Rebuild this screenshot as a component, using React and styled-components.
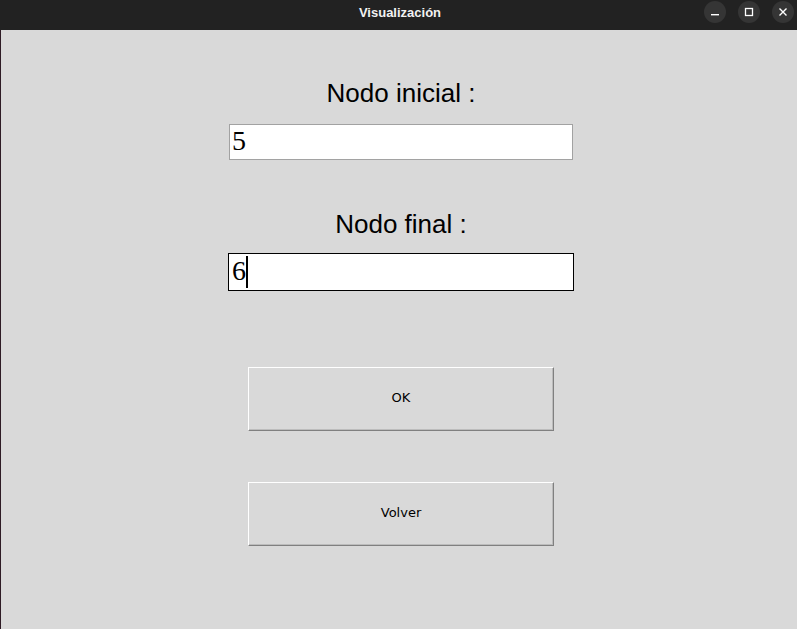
import React from 'react';
import styled, { createGlobalStyle } from 'styled-components';

const Global = createGlobalStyle`
  html, body {
    margin: 0;
    padding: 0;
    background: #d9d9d9;
  }
`

const Win = styled.div`
  width: 797px;
  height: 629px;
  display: flex;
  flex-direction: column;
  overflow: hidden;
`
const TitleBar = styled.div`
  height: 30px;
  flex-shrink: 0;
  background: #222222;
  position: relative;
  display: flex;
  align-items: center;
  justify-content: center;
  padding-bottom: 5px;
  box-sizing: border-box;
`
const Title = styled.div`
  color: #f2f2f2;
  font-family: "Liberation Sans", Arial, sans-serif;
  font-weight: bold;
  font-size: 13px;
  padding-left: 3px;
`
const Controls = styled.div`
  position: absolute;
  right: 3px;
  top: 1px;
  display: flex;
  gap: 12px;
`
const CtrlBtn = styled.div`
  width: 22px;
  height: 22px;
  border-radius: 50%;
  background: #353535;
  display: flex;
  align-items: center;
  justify-content: center;
`
const Body = styled.div`
  flex: 1;
  background: #d9d9d9;
  border-left: 1px solid #2e1b25;
  display: flex;
  flex-direction: column;
  align-items: center;
  padding-top: 48px;
  padding-left: 4px;
`
const Label = styled.div`
  font-family: "Liberation Sans", Arial, sans-serif;
  font-size: 26px;
  line-height: 30px;
  color: #000;
  margin-top: ${p => p.$top || 0}px;
`
const Entry = styled.div`
  width: 346px;
  height: 38px;
  box-sizing: border-box;
  margin-top: ${p => p.$top || 13}px;
  background: #fff;
  border: 1px solid ${p => (p.$focused ? '#000' : '#d9d9d9')};
  box-shadow: inset 0 0 0 1px ${p => (p.$focused ? '#ffffff' : '#a2a2a2')};
  padding: 1px 3px;
  font-family: "Liberation Serif", "Times New Roman", serif;
  font-size: 28px;
  line-height: 32px;
  color: #000;
  white-space: nowrap;
`
const Caret = styled.span`
  display: inline-block;
  width: 2px;
  height: 32px;
  background: #000;
  vertical-align: top;
  margin-top: 1px;
`
const Button = styled.button`
  width: 306px;
  height: 64px;
  margin-top: ${p => p.$top}px;
  background: #d9d9d9;
  border: none;
  border-top: 1px solid #ffffff;
  border-left: 1px solid #ffffff;
  border-right: 1px solid #808080;
  border-bottom: 1px solid #808080;
  box-shadow: inset -1px -1px 0 #bcbcbc;
  font-family: "DejaVu Sans", sans-serif;
  font-size: 13px;
  color: #000;
  padding: 0 0 3px 0;
`

const App = () => {
  return (
    <Win>
      <Global />
      <TitleBar>
        <Title>Visualización</Title>
        <Controls>
          <CtrlBtn>
            <svg width="10" height="10" viewBox="0 0 10 10">
              <rect x="1" y="7" width="8" height="1.4" fill="#fff" />
            </svg>
          </CtrlBtn>
          <CtrlBtn>
            <svg width="10" height="10" viewBox="0 0 10 10">
              <rect x="1.5" y="1.5" width="7" height="7" fill="none" stroke="#fff" strokeWidth="1.3" />
            </svg>
          </CtrlBtn>
          <CtrlBtn>
            <svg width="10" height="10" viewBox="0 0 10 10">
              <path d="M1.5 1.5 L8.5 8.5 M8.5 1.5 L1.5 8.5" stroke="#fff" strokeWidth="1.4" />
            </svg>
          </CtrlBtn>
        </Controls>
      </TitleBar>
      <Body>
        <Label>Nodo inicial :</Label>
        <Entry $top={15}>5</Entry>
        <Label $top={48}>Nodo final :</Label>
        <Entry $focused $top={14}>6<Caret /></Entry>
        <Button $top={76}>OK</Button>
        <Button $top={51}>Volver</Button>
      </Body>
    </Win>
  )
}

export default App
